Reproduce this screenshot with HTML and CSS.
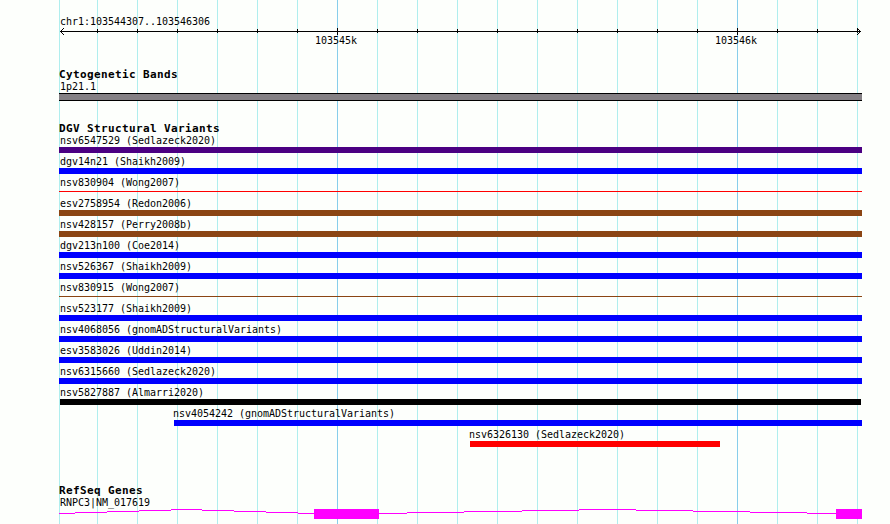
FILE: index.html
```
<!DOCTYPE html>
<html lang="en">
<head>
    <meta charset="UTF-8">
    <meta name="viewport" content="width=device-width, initial-scale=1.0">
    <title>chr1:103544307..103546306</title>
    <link rel="stylesheet" href="styles.css">
</head>
<body>
    <div class="panel">
        <div class="ruler">
            <div class="label">chr1:103544307..103546306</div>
            <svg class="axis" width="803" height="9" viewBox="0 0 803 9" shape-rendering="crispEdges">
                <path d="M1 4.5H802" stroke="#000" />
                <path d="M38.5 2v4M78.5 2v4M118.5 2v4M158.5 2v4M198.5 2v4M238.5 2v4M318.5 2v4M358.5 2v4M398.5 2v4M438.5 2v4M478.5 2v4M518.5 2v4M558.5 2v4M598.5 2v4M638.5 2v4M718.5 2v4M758.5 2v4M798.5 2v4" stroke="#000" />
                <path d="M278.5 1v7M678.5 1v7" stroke="#000" />
                <path d="M4 1h1v1h-1zM3 2h1v1h-1zM2 3h1v1h-1zM1 4h1v1h-1zM2 5h1v1h-1zM3 6h1v1h-1zM4 7h1v1h-1z" />
                <path d="M798 1h1v1h-1zM799 2h1v1h-1zM800 3h1v1h-1zM801 4h1v1h-1zM800 5h1v1h-1zM799 6h1v1h-1zM798 7h1v1h-1z" />
            </svg>
            <div class="ticks">
                <span>103545k</span>
                <span>103546k</span>
            </div>
        </div>

        <div class="track cytoband">
            <h2>Cytogenetic Bands</h2>
            <div class="label">1p21.1</div>
            <div class="band"></div>
        </div>

        <div class="track variants">
            <h2>DGV Structural Variants</h2>
            <div class="variant indigo"><div class="label">nsv6547529 (Sedlazeck2020)</div><div class="bar"></div></div>
            <div class="variant blue"><div class="label">dgv14n21 (Shaikh2009)</div><div class="bar"></div></div>
            <div class="variant red thin"><div class="label">nsv830904 (Wong2007)</div><div class="bar"></div></div>
            <div class="variant brown"><div class="label">esv2758954 (Redon2006)</div><div class="bar"></div></div>
            <div class="variant brown"><div class="label">nsv428157 (Perry2008b)</div><div class="bar"></div></div>
            <div class="variant blue"><div class="label">dgv213n100 (Coe2014)</div><div class="bar"></div></div>
            <div class="variant blue"><div class="label">nsv526367 (Shaikh2009)</div><div class="bar"></div></div>
            <div class="variant brown thin"><div class="label">nsv830915 (Wong2007)</div><div class="bar"></div></div>
            <div class="variant blue"><div class="label">nsv523177 (Shaikh2009)</div><div class="bar"></div></div>
            <div class="variant blue"><div class="label">nsv4068056 (gnomADStructuralVariants)</div><div class="bar"></div></div>
            <div class="variant blue"><div class="label">esv3583026 (Uddin2014)</div><div class="bar"></div></div>
            <div class="variant blue"><div class="label">nsv6315660 (Sedlazeck2020)</div><div class="bar"></div></div>
            <div class="variant black"><div class="label">nsv5827887 (Almarri2020)</div><div class="bar"></div></div>
            <div class="variant blue partial" style="margin-left: 115px"><div class="label">nsv4054242 (gnomADStructuralVariants)</div><div class="bar"></div></div>
            <div class="variant red partial" style="margin-left: 411px; width: 250px"><div class="label">nsv6326130 (Sedlazeck2020)</div><div class="bar"></div></div>
        </div>

        <div class="track genes">
            <h2>RefSeq Genes</h2>
            <div class="label">RNPC3|NM_017619</div>
            <svg class="gene" width="803" height="10" viewBox="0 0 803 10" shape-rendering="crispEdges">
                <!-- introns -->
                <path stroke="#f0f" d="M0 4.5H16M16 3.5H48M48 2.5H80M80 1.5H112M112 .5H143M143 1.5H175M175 2.5H207M207 3.5H239M239 4.5H255" />
                <path stroke="#f0f" d="M320 4.5H348M348 3.5H405M405 2.5H463M463 1.5H520M520 .5H577M577 1.5H634M634 2.5H691M691 3.5H748M748 4.5H777" />
                <!-- exons -->
                <rect x="255" y="0" width="65" height="10" fill="#f0f" />
                <rect x="777" y="0" width="26" height="10" fill="#f0f" />
            </svg>
        </div>
    </div>
</body>
</html>
```
FILE: styles.css
```
body {
    margin: 0;
    background-color: #fdfffc;
    color: #000;
    font-family: "DejaVu Sans Mono", monospace;
    font-size: 10px;
}

/* grid lines: left edge, every 1k, every 100 bp */
.panel {
    box-sizing: border-box;
    width: 803px;
    height: 524px;
    margin-left: 59px;
    padding-top: 13px;
    overflow: hidden;
    background-image:
        linear-gradient(to right, #afeeee 1px, transparent 1px),
        linear-gradient(to right, #87ceeb 1px, transparent 1px),
        linear-gradient(to right, #afeeee 1px, transparent 1px);
    background-size: 803px 100%, 400px 100%, 40px 100%;
    background-position: 0 0, 278px 0, -2px 0;
    background-repeat: no-repeat, repeat-x, repeat-x;
}

.label {
    box-sizing: border-box;
    height: 15px;
    padding: 3px 0 0 1px;
    line-height: 12px;
    letter-spacing: -0.02px;
    white-space: nowrap;
}

h2 {
    height: 12px;
    margin: 0;
    font-size: 11px;
    line-height: 14px;
    letter-spacing: 0.378px;
    white-space: nowrap;
}

.ruler {
    height: 55px;
}

.axis {
    display: block;
    margin-top: -1px;
}

.ticks {
    display: flex;
    gap: 358px;
    padding-left: 256px;
    line-height: 10px;
    letter-spacing: -0.02px;
}

.ticks span {
    width: 42px;
}

.cytoband {
    height: 54px;
}

.cytoband .label {
    height: 13px;
    padding-top: 1px;
}

.band {
    height: 6px;
    border-top: 1px solid #000;
    border-bottom: 1px solid #000;
    background-color: #848084;
}

.variants {
    height: 362px;
}

.variants h2 {
    height: 10px;
}

.variant {
    height: 21px;
}

.bar {
    height: 6px;
    background-color: currentColor;
}

.variant .label {
    color: #000;
}

.partial .label {
    padding-left: 0;
    margin-left: -1px;
}

.thin .bar {
    height: 1px;
    margin-top: 2px;
}

.indigo { color: #4b0082; }
.blue { color: #0000ff; }
.red { color: #ff0000; }
.brown { color: #8b4513; }
.black { color: #000; }

.black .bar {
    margin: 0 1px;
}

.genes .label {
    height: 13px;
    padding-top: 1px;
}

.gene {
    display: block;
}
```
